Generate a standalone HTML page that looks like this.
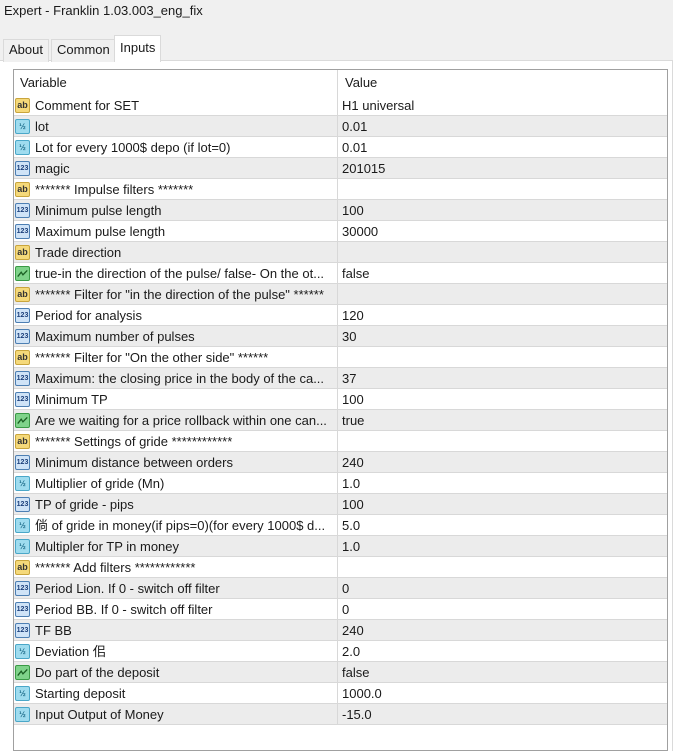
<!DOCTYPE html>
<html><head><style>
body{margin:0;width:673px;height:740px;background:#f0f0f0;font-family:"Liberation Sans","Noto Sans CJK SC",sans-serif;font-size:13px;color:#1a1a1a;overflow:hidden;position:relative}
.title{position:absolute;left:4px;top:3px;font-size:13px}
.tab{position:absolute;top:39px;height:22px;line-height:20px;padding:0 5px;border:1px solid #dadada;border-bottom:none;background:#f0f0f0}
.tab.act{top:35px;height:26px;background:#fff;line-height:24px;z-index:2}
.panel{position:absolute;left:0;top:60px;width:672px;height:690px;background:#fff;border-top:1px solid #dadada;border-right:1px solid #dadada}
.tbl{position:absolute;left:13px;top:69px;width:653px;height:680px;border:1px solid #a0a0a0;background:#fff}
.row{position:absolute;left:0;width:653px;height:20px;border-bottom:1px solid #d8d8d8}
.row.g{background:#ececec}
.c1{position:absolute;left:21px;top:3px;height:16px;line-height:16px;white-space:nowrap;width:302px;overflow:hidden}
.c2{position:absolute;left:328px;top:3px;line-height:16px}
.div{position:absolute;left:323px;top:0;width:1px;height:655px;background:#d8d8d8;z-index:3}
.ic{position:absolute;left:1px;top:3px;width:15px;height:15px;box-sizing:border-box;border-radius:2px;font-size:8px;font-weight:bold;text-align:center;line-height:13px}
.ab{background:#f5d97a;border:1px solid #c9a53c;color:#333;font-size:9px}
.d{background:#9fdcef;border:1px solid #4aa7c8;color:#1d6c8a}
.i{background:#cfe3f7;border:1px solid #4d7fb3;color:#1c3f7a;font-size:7px}
.b{background:#7fd38a;border:1px solid #3a9a45}
</style></head><body>
<div class="title">Expert - Franklin 1.03.003_eng_fix</div>
<div class="panel"></div>
<div class="tab" style="left:3px">About</div>
<div class="tab" style="left:51px">Common</div>
<div class="tab act" style="left:114px">Inputs</div>
<div class="tbl">
<div class="row" style="top:0;height:24px;border-bottom:none"><div class="c1" style="left:6px;top:5px">Variable</div><div class="c2" style="top:5px;left:331px">Value</div></div>
<div class="div"></div>
<div id="rows"></div>
</div>
<script>
var r=[["ab","Comment for SET","H1 universal"],["d","lot","0.01"],["d","Lot for every 1000$ depo (if lot=0)","0.01"],["i","magic","201015"],["ab","******* Impulse filters *******",""],["i","Minimum pulse length","100"],["i","Maximum pulse length","30000"],["ab","Trade direction",""],["b","true-in the direction of the pulse/ false- On the ot...","false"],["ab","******* Filter for \"in the direction of the pulse\" ******",""],["i","Period for analysis","120"],["i","Maximum number of pulses","30"],["ab","******* Filter for \"On the other side\"  ******",""],["i","Maximum: the closing price in the body of the ca...","37"],["i","Minimum TP","100"],["b","Are we waiting for a price rollback within one can...","true"],["ab","******* Settings of gride ************",""],["i","Minimum distance between orders","240"],["d","Multiplier of gride (Mn)","1.0"],["i","TP of gride - pips","100"],["d","倘 of gride in money(if pips=0)(for every 1000$ d...","5.0"],["d","Multipler for TP in money","1.0"],["ab","******* Add filters        ************",""],["i","Period Lion. If 0 - switch off filter","0"],["i","Period BB.   If 0 - switch off filter","0"],["i","TF BB","240"],["d","Deviation 佀","2.0"],["b","Do part of the deposit","false"],["d","Starting deposit","1000.0"],["d","Input Output of Money","-15.0"]];
var h="";
var lbl={ab:"ab",d:"½",i:"123",b:""};
r.forEach(function(x,k){var t=25+k*21;
var ic=x[0]=="b"?'<svg class="ic b" viewBox="0 0 15 15"><path d="M2 11 L6 6 L8 9 L13 4" stroke="#1a5e22" stroke-width="1.5" fill="none"/></svg>':'<div class="ic '+x[0]+'">'+lbl[x[0]]+'</div>';
h+='<div class="row'+(k%2?' g':'')+'" style="top:'+t+'px">'+ic+'<div class="c1">'+x[1].replace(/</g,"&lt;")+'</div><div class="c2">'+x[2]+'</div></div>';});
document.getElementById("rows").innerHTML=h;
</script>
</body></html>
